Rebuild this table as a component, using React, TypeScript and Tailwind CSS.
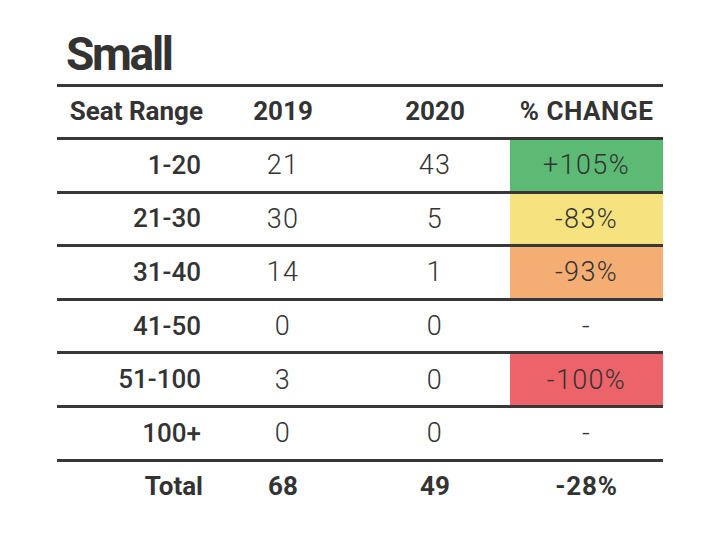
const rows = [
  { range: '1-20', y19: '21', y20: '43', change: '+105%', bg: 'bg-[#5dba74]' },
  { range: '21-30', y19: '30', y20: '5', change: '-83%', bg: 'bg-[#f6e37f]' },
  { range: '31-40', y19: '14', y20: '1', change: '-93%', bg: 'bg-[#f4ad73]' },
  { range: '41-50', y19: '0', y20: '0', change: '-', bg: '' },
  { range: '51-100', y19: '3', y20: '0', change: '-100%', bg: 'bg-[#ec636a]' },
  { range: '100+', y19: '0', y20: '0', change: '-', bg: '' },
]

const rowCls =
  'grid grid-cols-[153px_150px_150px_153px] h-[53.6px] border-t-[3px] border-[#383838] text-[26px] text-[#333]'

export default function App() {
  return (
    <div className="w-[720px] h-[540px] bg-white font-['Roboto',sans-serif] text-[#333]">
      <div className="ml-[57px] w-[606px]">
        {/* title */}
        <h1 className="pt-[31px] pb-[6.5px] pl-[9px] text-[46px] leading-[46px] font-bold tracking-[-0.05em]">Small</h1>

        {/* header */}
        <div className={rowCls + ' font-bold'}>
          <div className="flex items-center justify-end pr-[7px]">Seat Range</div>
          <div className="flex items-center justify-center pr-[4px]">2019</div>
          <div className="flex items-center justify-center">2020</div>
          <div className="flex items-center justify-center tracking-[0.02em]">% CHANGE</div>
        </div>

        {rows.map((r) => (
          <div key={r.range} className={rowCls}>
            <div className="flex items-center justify-end pr-[9px] font-medium">{r.range}</div>
            <div className="flex items-center justify-center pr-[4px] font-light text-[27px] tracking-[0.05em]">{r.y19}</div>
            <div className="flex items-center justify-center font-light text-[27px] tracking-[0.05em]">{r.y20}</div>
            <div className={'flex items-center justify-center font-light text-[27px] tracking-[0.05em] ' + r.bg}>{r.change}</div>
          </div>
        ))}

        {/* total */}
        <div className={rowCls + ' font-bold'}>
          <div className="flex items-center justify-end pr-[7px]">Total</div>
          <div className="flex items-center justify-center pr-[4px]">68</div>
          <div className="flex items-center justify-center">49</div>
          <div className="flex items-center justify-center tracking-[0.03em]">-28%</div>
        </div>
      </div>
    </div>
  )
}
